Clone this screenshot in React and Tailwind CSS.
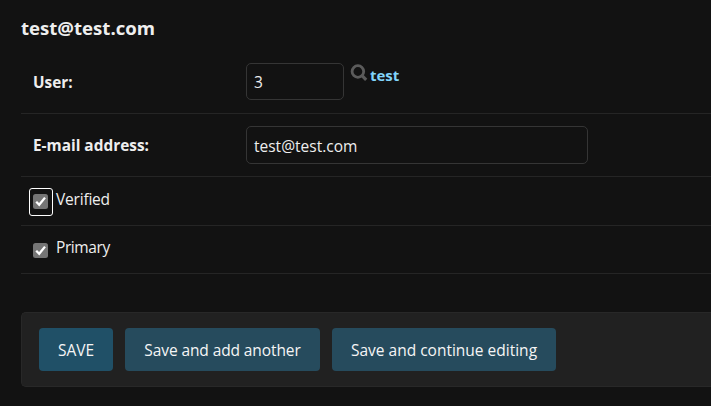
function SearchIcon() {
  return (
    <svg className="mt-[7px] h-[18px] w-[18px]" viewBox="0 0 18 18" fill="none" stroke="#5b5b5b">
      <circle cx="7.9" cy="7.5" r="5.8" strokeWidth="2.8" />
      <path d="M12 11.6 L16.2 15.8" strokeWidth="3.2" />
    </svg>
  );
}

function Checkbox({ focused = false }) {
  return (
    <span
      className={
        focused
          ? "ml-[8px] flex h-[28px] w-[24px] items-start rounded-[3px] border border-white pt-[5px] pl-[3px]"
          : "ml-[8px] flex h-[28px] w-[24px] items-start pt-[6px] pl-[4px]"
      }
    >
      <svg className="h-[15px] w-[15px] shrink-0" viewBox="0 0 15 15">
        <rect width="15" height="15" rx="2.5" fill="#757575" />
        <path d="M3.2 7.8 L6.2 10.8 L12 3.6" fill="none" stroke="#ffffff" strokeWidth="2.3" />
      </svg>
    </span>
  );
}

export default function App() {
  return (
    <main className="h-[406px] w-[711px] overflow-hidden bg-[#121212] pl-[21px] font-['Open_Sans','Noto_Sans',sans-serif] text-[15.5px] leading-[20px] whitespace-nowrap text-[#eeeeee]">
      <h2 className="flex h-[51px] items-start pt-[18px] text-[18.6px] font-bold">test@test.com</h2>

      <div className="flex h-[63px] items-start border-b border-[#252525] pt-[12px]">
        <label className="w-[225px] pt-[9px] pl-[12px] text-[15.3px] font-bold">User:</label>
        <div className="h-[37px] w-[98px] rounded-[5px] border border-[#353535] pt-[8px] pl-[7px]">3</div>
        <div className="flex pl-[6px]">
          <div className="-mt-[6px]"><SearchIcon /></div>
          <strong className="pt-[2px] pl-[2px] text-[15px] font-bold text-[#81d4fa]">test</strong>
        </div>
      </div>

      <div className="flex h-[63px] items-start border-b border-[#252525] pt-[12px]">
        <label className="w-[225px] pt-[10px] pl-[12px] text-[15.4px] font-bold">E-mail address:</label>
        <div className="h-[38px] w-[342px] rounded-[5px] border border-[#353535] pt-[9px] pl-[7px]">test@test.com</div>
      </div>

      <div className="flex h-[49px] items-start border-b border-[#252525] pt-[11px]">
        <Checkbox focused />
        <label className="pt-[1px] pl-[3px] tracking-[-0.2px]">Verified</label>
      </div>

      <div className="flex h-[48px] items-start border-b border-[#252525] pt-[11px]">
        <Checkbox />
        <label className="pl-[3px] tracking-[-0.4px]">Primary</label>
      </div>

      <div className="mt-[38px] flex h-[75px] gap-[12px] rounded-l-[5px] border border-r-0 border-[#282828] bg-[#212121] pt-[15px] pl-[17px] text-[#f5f5f5]">
        <button className="h-[43px] w-[74px] rounded-[4px] bg-[#205067] pt-px">SAVE</button>
        <button className="h-[43px] w-[195px] rounded-[4px] bg-[#264b5d] pt-px tracking-[-0.1px]">Save and add another</button>
        <button className="h-[43px] w-[224px] rounded-[4px] bg-[#264b5d] pt-px">Save and continue editing</button>
      </div>
    </main>
  );
}
